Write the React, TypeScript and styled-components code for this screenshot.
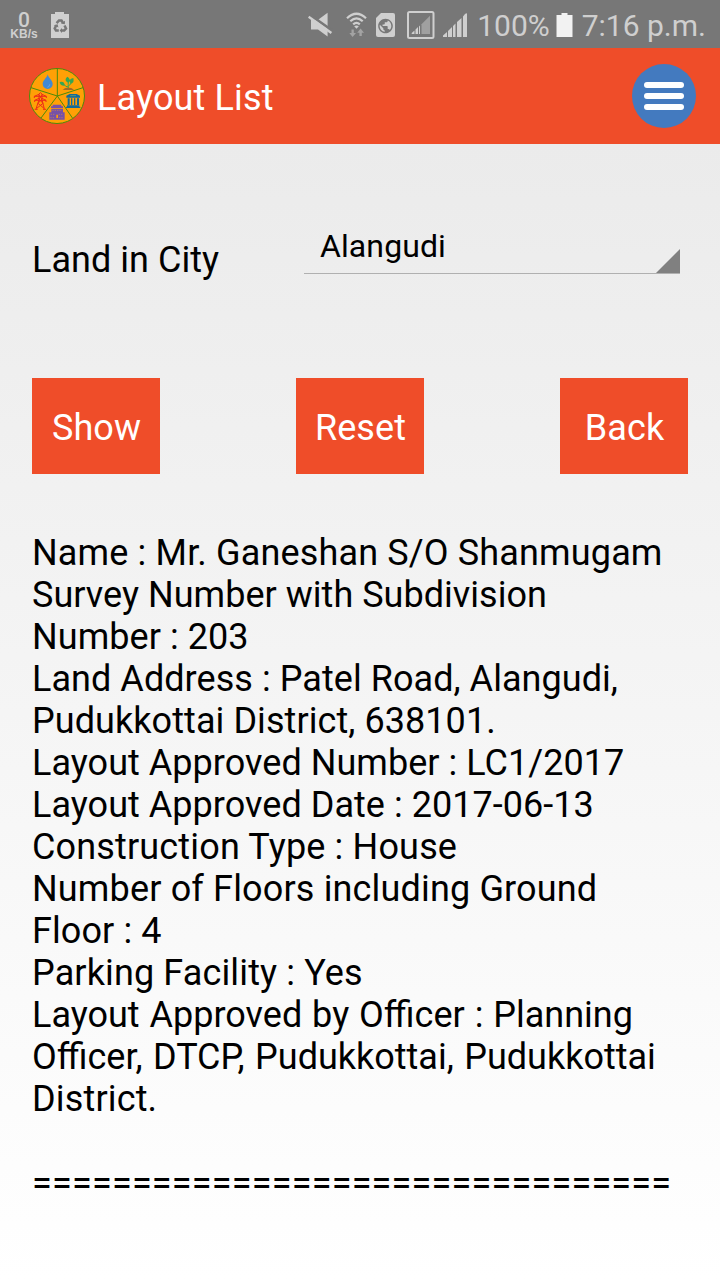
import React from "react";
import styled, { createGlobalStyle } from "styled-components";

const GlobalStyle = createGlobalStyle`
  html, body { margin: 0; padding: 0; }
  body { font-family: Roboto, "Liberation Sans", sans-serif; }
  *, *::before, *::after { box-sizing: border-box; }
`;

const Screen = styled.div`
  width: 720px;
  height: 1280px;
  overflow: hidden;
  display: flex;
  flex-direction: column;
`;

const StatusBar = styled.header`
  flex: 0 0 48px;
  background: #777777;
  color: #cfcfcf;
  display: flex;
  align-items: flex-start;
  justify-content: space-between;
  padding: 0 14px 0 9px;
`;

const StatusGroup = styled.div`
  display: flex;
  align-items: flex-start;
`;

const NetSpeed = styled.div`
  width: 30px;
  padding-top: 11px;
  display: flex;
  flex-direction: column;
  align-items: center;
  font-family: "Liberation Sans", sans-serif;
  font-weight: 700;
`;

const SpeedValue = styled.span`
  font-family: Roboto, sans-serif;
  font-weight: 500;
  font-size: 21px;
  line-height: 18px;
`;

const SpeedUnit = styled.span`
  font-size: 12px;
  line-height: 12px;
  margin-top: -1px;
`;

const StatusIcon = styled.svg<{ $gap?: number }>`
  display: block;
  height: 48px;
  flex: none;
  margin-left: ${(p) => p.$gap ?? 0}px;
`;

const StatusText = styled.span<{ $gap: number }>`
  font-size: 30px;
  line-height: 35px;
  padding-top: 8px;
  margin-left: ${(p) => p.$gap}px;
  white-space: nowrap;
`;

const AppBar = styled.div`
  flex: 0 0 96px;
  background: #ef4d29;
  display: flex;
  align-items: center;
  padding: 0 24px 0 29px;
`;

const Title = styled.h1`
  margin: 3px 0 0 12px;
  flex: 1;
  color: #fff;
  font-size: 36px;
  font-weight: 400;
  line-height: 42px;
  letter-spacing: 0.14px;
`;

const MenuButton = styled.button`
  width: 64px;
  height: 64px;
  border: 0;
  border-radius: 50%;
  background: #437abf;
  padding: 0;
  display: flex;
  flex-direction: column;
  align-items: center;
  justify-content: center;
  gap: 5px;
`;

const MenuLine = styled.span`
  width: 40px;
  height: 6px;
  border-radius: 3px;
  background: #fff;
`;

const Content = styled.main`
  flex: 1;
  color: #000;
  background: linear-gradient(#ebebeb, #ffffff);
  padding: 80px 32px 0;
  font-size: 36px;
  line-height: 42px;
`;

const Field = styled.div`
  display: flex;
  align-items: flex-start;
`;

const FieldLabel = styled.label`
  width: 272px;
  padding-top: 15px;
  letter-spacing: 0.04px;
`;

const Spinner = styled.div`
  width: 376px;
  height: 50px;
  border-bottom: 1px solid #b0b0b0;
  display: flex;
  justify-content: space-between;
  align-items: flex-end;
  padding-left: 16px;
`;

const SpinnerValue = styled.span`
  font-size: 32px;
  line-height: 38px;
  padding-bottom: 8px;
  letter-spacing: 0.1px;
`;

const SpinnerArrow = styled.span`
  width: 24px;
  height: 24px;
  background: #808080;
  clip-path: polygon(100% 0, 100% 100%, 0 100%);
`;

const Actions = styled.div`
  display: flex;
  justify-content: space-between;
  margin-top: 97px;
`;

const ActionButton = styled.button`
  width: 128px;
  height: 96px;
  border: 0;
  background: #ef4d29;
  color: #fff;
  font: inherit;
  letter-spacing: 0.1px;
  padding: 4px 0 0 1px;
  text-align: center;
`;

const Details = styled.div`
  margin-top: 58px;
`;

const Line = styled.p<{ $tracking?: number; $wordGap?: number }>`
  margin: 0;
  min-height: 42px;
  white-space: nowrap;
  letter-spacing: ${(p) => (p.$tracking ? `${p.$tracking}px` : "normal")};
  word-spacing: ${(p) => p.$wordGap ?? 0}px;
`;

type DetailLine = { text: string; tracking?: number; wordGap?: number };

const lines: DetailLine[] = [
  { text: "Name : Mr. Ganeshan S/O Shanmugam", tracking: 0.15 },
  { text: "Survey Number with Subdivision", tracking: 0.03 },
  { text: "Number : 203", tracking: 0.05 },
  { text: "Land Address : Patel Road, Alangudi,", tracking: 0.055 },
  { text: "Pudukkottai District, 638101.", tracking: 0.07 },
  { text: "Layout Approved Number : LC1/2017", tracking: 0.04 },
  { text: "Layout Approved Date : 2017-06-13", tracking: 0.04 },
  { text: "Construction Type : House", tracking: 0.16 },
  { text: "Number of Floors including Ground", tracking: 0.16 },
  { text: "Floor : 4", tracking: 0.1 },
  { text: "Parking Facility : Yes", tracking: 0.13 },
  { text: "Layout Approved by Officer : Planning", wordGap: 1 },
  { text: "Officer, DTCP, Pudukkottai, Pudukkottai", wordGap: 1.5 },
  { text: "District.", tracking: 0.16 },
  { text: "" },
  { text: "================================", tracking: 0.22 },
];

const BatteryRecycle = () => (
  <StatusIcon $gap={12} width="18" viewBox="0 0 18 48">
    <path d="M0 14H4V12H13V14H18V38H0Z" fill="#cfcfcf" />
    <g fill="none" stroke="#777" strokeWidth="2.5">
      <path d="M5.6 23.2 8 20.5H10.5L12 23" />
      <path d="M13.5 25.5 15 28.5 13.2 30.5H10.2" />
      <path d="M7.8 30.5H5L3.7 28.5 5.3 25.2" />
    </g>
    <path d="M10 23.5 13.8 24.2 14 20.8ZM11 28V33L8.6 30.5ZM2.7 25.2 6.6 24.2 7.4 27.6Z" fill="#777" />
  </StatusIcon>
);

const Muted = () => (
  <StatusIcon width="25" viewBox="0 0 25 48">
    <path d="M3 20H9.8L19.6 12.8V36.5L10 29.5H3Z" fill="#cfcfcf" />
    <path d="M1.5 14.7 25 31.2" stroke="#777" strokeWidth="2.8" />
    <path d="M.6 16.8 23.4 33" stroke="#cfcfcf" strokeWidth="2.4" />
  </StatusIcon>
);

const Wifi = () => (
  <StatusIcon $gap={13} width="22" viewBox="0 0 22 48">
    <g fill="none" stroke="#cfcfcf" strokeWidth="2.2">
      <path d="M1 18.3Q10.5 9.2 20 18.3" />
      <path d="M4.3 21.3Q10.5 15.4 16.7 21.3" />
      <path d="M7.2 24.4Q10.5 21.2 13.8 24.4" />
    </g>
    <path d="M8.2 26.3Q10.5 24.5 12.8 26.3L10.5 28.8Z" fill="#cfcfcf" />
    <path d="M5.5 29.5H7.8V33H10L6.6 37 3.3 33H5.5ZM14.6 28.5 18 32.7H15.8V36H13.4V32.7H11.2Z" fill="#a3a3a3" />
  </StatusIcon>
);

const SimGlobe = () => (
  <StatusIcon $gap={8} width="19" viewBox="0 0 19 48">
    <path d="M5 13H17Q19 13 19 15V35Q19 37 17 37H2Q0 37 0 35V18Z" fill="#cfcfcf" />
    <path
      transform="translate(.74 17.24) scale(.73)"
      fill="#777"
      d="M12 2C6.48 2 2 6.48 2 12s4.48 10 10 10 10-4.48 10-10S17.52 2 12 2zm-1 17.93c-3.95-.49-7-3.85-7-7.93 0-.62.08-1.21.21-1.79L9 15v1c0 1.1.9 2 2 2v1.93zm6.9-2.54c-.26-.81-1-1.39-1.9-1.39h-1v-3c0-.55-.45-1-1-1H8v-2h2c.55 0 1-.45 1-1V7h2c1.1 0 2-.9 2-2v-.41c2.93 1.19 5 4.06 5 7.41 0 2.08-.8 3.97-2.1 5.39z"
    />
  </StatusIcon>
);

const BoxedSignal = () => (
  <StatusIcon $gap={12} width="28" viewBox="0 0 28 48">
    <rect x="1" y="12" width="25.5" height="26" rx="1.5" fill="none" stroke="#cfcfcf" strokeWidth="2" />
    <path d="M14.5 24.2 23 15.7V34H14.5Z" fill="#a0a0a0" />
    <path d="M4.7 34V33L7.5 30.5V34ZM8.5 34V29.5L11 27V34ZM12 34V26.5L13 25.5V34Z" fill="#cfcfcf" />
  </StatusIcon>
);

const Signal = () => (
  <StatusIcon $gap={8} width="25" viewBox="0 0 25 48">
    <path d="M0 37V35.5L4 32V37ZM5 37V31L9 27V37ZM10 37V26L12.5 23.5V37ZM14 37V22L18.5 18V37ZM20 37V16.5L22 14Q24 12.5 24 14V37Z" fill="#cfcfcf" />
  </StatusIcon>
);

const Battery = () => (
  <StatusIcon $gap={6} width="17" viewBox="0 0 17 48">
    <path d="M.5 15H5.5V13H11.5V15H16.5V37H.5Z" fill="#f2f2f2" />
  </StatusIcon>
);

const Logo = () => (
  <svg width="56" height="56" viewBox="27 24 168 168">
    <circle cx="111" cy="108" r="82.5" fill="#ffa006" stroke="#4b8b0b" strokeWidth="3" />
    <g fill="none" stroke="#4b8b0b" strokeWidth="3">
      <path d="M112 25V108L189 83M112 108 158 175M112 108 63 174M112 108 33 83" />
    </g>
    <path d="M83 43C80 55 68 61 68 72A15 15 0 0 0 98 72C98 61 86 55 83 43Z" fill="#4389d3" />
    <path d="M89 73Q89 81 82 82" fill="none" stroke="#71b0ea" strokeWidth="2" />
    <path d="M145 85C144 75 145 70 145 65M145 81Q136 81 132 73M146 77Q154 74 154 65" fill="none" stroke="#35a652" strokeWidth="3" />
    <path d="M145 68C133 63 136 53 143 50C151 57 152 63 145 68ZM134 77Q120 78 119 66Q134 62 134 77ZM152 71Q143 57 160 54Q164 69 152 71Z" fill="#35a652" />
    <path d="M128 90Q136 82 145 84Q154 82 162 90Z" fill="#a26a27" />
    <g fill="none" stroke="#ed2c18" strokeWidth="3">
      <path d="M57 102 61 98 66 102V119L73 147M57 102V119L48 147M43 109H79M43 109 57 103M79 109 66 103M43 109V114M79 109V114M44 121H78M44 121 57 115M78 121 66 115M44 121V126M78 121V126M57 105 66 117 54 130 72 145M66 105 57 117 69 130 50 145M44 148H53M69 148H78" />
    </g>
    <path d="M139 113V107L149 102H170L180 107V113ZM143 115H149V135H143ZM153 115H157V135H153ZM162 115H166V135H162ZM171 115H177V135H171ZM141 136H178V140H141ZM138 140H181V144H138Z" fill="#116b9b" />
    <path d="M151 107H168" stroke="#5f956f" strokeWidth="3" />
    <path d="M93 144V139H98V134H124V139H129V144ZM94 146H129V157H134V179H88V157H94Z" fill="#7651a7" />
    <path d="M97 151H126M92 163H106M116 163H130M91 173H105M117 173H131" stroke="#d18a48" strokeWidth="2" strokeDasharray="4 3" />
    <path d="M109 164H114V174H109Z" fill="#ffa006" />
  </svg>
);

export default function App() {
  return (
    <>
      <GlobalStyle />
      <Screen>
        <StatusBar>
          <StatusGroup>
            <NetSpeed>
              <SpeedValue>0</SpeedValue>
              <SpeedUnit>KB/s</SpeedUnit>
            </NetSpeed>
            <BatteryRecycle />
          </StatusGroup>
          <StatusGroup>
            <Muted />
            <Wifi />
            <SimGlobe />
            <BoxedSignal />
            <Signal />
            <StatusText $gap={9}>100%</StatusText>
            <Battery />
            <StatusText $gap={9}>7:16 p.m.</StatusText>
          </StatusGroup>
        </StatusBar>
        <AppBar>
          <Logo />
          <Title>Layout List</Title>
          <MenuButton aria-label="Menu">
            <MenuLine />
            <MenuLine />
            <MenuLine />
          </MenuButton>
        </AppBar>
        <Content>
          <Field>
            <FieldLabel>Land in City</FieldLabel>
            <Spinner>
              <SpinnerValue>Alangudi</SpinnerValue>
              <SpinnerArrow />
            </Spinner>
          </Field>
          <Actions>
            <ActionButton>Show</ActionButton>
            <ActionButton>Reset</ActionButton>
            <ActionButton>Back</ActionButton>
          </Actions>
          <Details>
            {lines.map((line, i) => (
              <Line key={i} $tracking={line.tracking} $wordGap={line.wordGap}>
                {line.text}
              </Line>
            ))}
          </Details>
        </Content>
      </Screen>
    </>
  );
}
